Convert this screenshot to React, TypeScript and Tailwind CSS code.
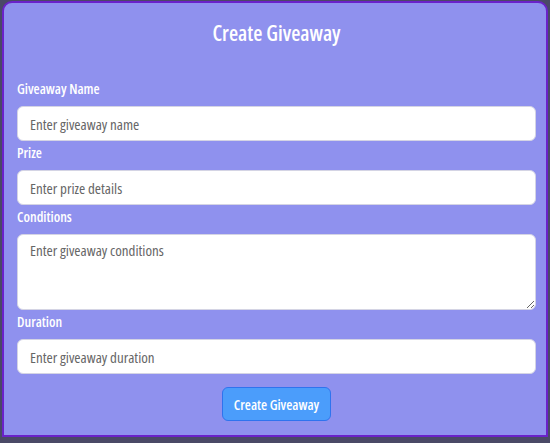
const fieldFont = {
  fontFamily: '"Open Sans", "Liberation Sans", sans-serif',
};

type Field = {
  label: string;
  placeholder: string;
  multiline?: boolean;
};

const fields: Field[] = [
  { label: 'Giveaway Name', placeholder: 'Enter giveaway name' },
  { label: 'Prize', placeholder: 'Enter prize details' },
  { label: 'Conditions', placeholder: 'Enter giveaway conditions', multiline: true },
  { label: 'Duration', placeholder: 'Enter giveaway duration' },
];

export default function App() {
  return (
    <div
      className="h-[443px] w-[550px] overflow-hidden bg-[#4a4966] px-[2px] pt-px font-stretch-[75%]"
      style={fieldFont}
    >
      <div className="h-[436px] rounded-t-[10px] border-2 border-[#6a22c9] bg-[#8f91ee] pl-[13px] pr-[10px]">
        <h2 className="pt-[15px] text-center text-[21px] font-semibold leading-[30px] text-white">Create Giveaway</h2>
        <form className="mt-[33px] flex flex-col" onSubmit={(e) => e.preventDefault()}>
          {fields.map((f) => (
            <div key={f.label} className="flex flex-col">
              <label className="mb-[9px] text-[14px] font-semibold leading-[16px] text-white">{f.label}</label>
              {f.multiline ? (
                <textarea
                  placeholder={f.placeholder}
                  className="h-[76px] w-full resize-y rounded-[6px] border border-[#d4d4e4] bg-white px-3 py-[5px] text-[15px] leading-[20px] text-gray-700 placeholder:text-[#666666] focus:outline-none"
                />
              ) : (
                <input
                  type="text"
                  placeholder={f.placeholder}
                  className="h-[35px] w-full rounded-[6px] border border-[#d4d4e4] bg-white px-3 text-[15px] text-gray-700 placeholder:text-[#666666] focus:outline-none"
                />
              )}
              <div className="h-[4px]" />
            </div>
          ))}
          <div className="mt-[9px] flex justify-center">
            <button
              type="submit"
              className="h-[34px] w-[109px] rounded-[6px] border border-[#2f73ee] bg-[#4b9dfb] text-[14px] font-semibold text-white"
            >
              Create Giveaway
            </button>
          </div>
        </form>
      </div>
    </div>
  );
}
